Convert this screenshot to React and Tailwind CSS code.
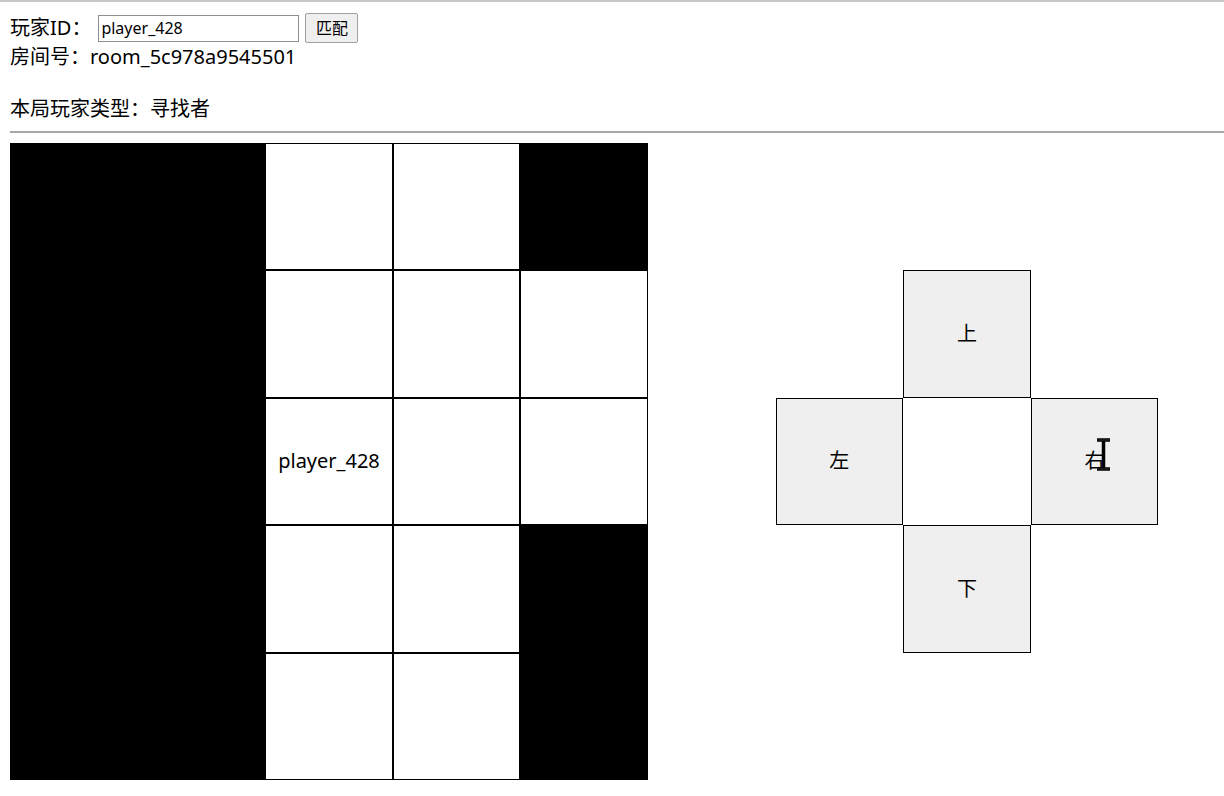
const board = [
  [1, 1, 0, 0, 1],
  [1, 1, 0, 0, 0],
  [1, 1, 2, 0, 0],
  [1, 1, 0, 0, 1],
  [1, 1, 0, 0, 1],
];

const font = { fontFamily: "'Noto Sans', 'Noto Sans CJK SC', sans-serif" };

function Cell({ v }) {
  if (v === 1) return <div className="bg-black border border-black" />;
  return (
    <div className="bg-white border border-black flex items-center justify-center text-[20px] text-black">
      {v === 2 ? "player_428" : ""}
    </div>
  );
}

function Pad({ label }) {
  return (
    <div className="bg-[#efefef] border border-black flex items-center justify-center text-[20px] text-black">
      {label}
    </div>
  );
}

export default function App() {
  return (
    <div className="relative min-h-[796px] w-[1224px] bg-white border-t-2 border-[#c8c8c8] text-black" style={font}>
      <div className="pt-[11px] pl-[10px]">
        <div className="flex items-center h-[30px] text-[20px]">
          <span>玩家ID：</span>
          <input
            readOnly
            value="player_428"
            className="ml-[7px] w-[201px] h-[27px] border border-[#8f8f8f] px-[2px] text-[16px] text-black outline-none"
            style={font}
          />
          <button className="ml-[6px] w-[53px] h-[30px] border border-[#a0a0a0] rounded-[2px] bg-[#efefef] text-[16px] text-black">
            匹配
          </button>
        </div>
        <div className="h-[28px] leading-[28px] text-[20px]">房间号：room_5c978a9545501</div>
        <div className="h-[24px]" />
        <div className="h-[28px] leading-[28px] text-[20px]">本局玩家类型：寻找者</div>
      </div>
      <div className="ml-[10px] mt-[8px] border-t-2 border-[#a8a8a8]" />
      <div className="flex ml-[10px] mt-[10px]">
        <div className="grid grid-cols-[repeat(5,127.6px)] auto-rows-[127.4px]">
          {board.flatMap((row, r) => row.map((v, c) => <Cell key={`${r}-${c}`} v={v} />))}
        </div>
        <div className="ml-[127.6px] grid grid-cols-[repeat(3,127.6px)] auto-rows-[127.4px]">
          <div />
          <div />
          <div />
          <div />
          <Pad label="上" />
          <div />
          <Pad label="左" />
          <div />
          <Pad label="右" />
          <div />
          <Pad label="下" />
          <div />
        </div>
      </div>
      <svg className="absolute left-[1096px] top-[436px]" width="15" height="33" viewBox="0 0 15 33">
        <path d="M1 2h13M1 31h13M7.5 2v29" stroke="#000" strokeWidth="3.5" fill="none" />
        <path d="M1 2h13M1 31h13" stroke="#fff" strokeWidth="0.6" fill="none" opacity="0.3" />
      </svg>
    </div>
  );
}
